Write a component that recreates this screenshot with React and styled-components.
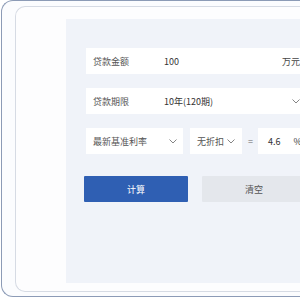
import React from 'react';
import styled, { createGlobalStyle } from 'styled-components';

const Global = createGlobalStyle`
  html, body { margin: 0; padding: 0; background: #ffffff; }
  body { font-family: "Noto Sans CJK SC", "Noto Sans", sans-serif; overflow: hidden; }
`;

const Frame = styled.div`
  margin-left: 1px;
  width: 330px;
  height: 297px;
  box-sizing: border-box;
  border: 1.5px solid #8c9bb6;
  border-right: none;
  border-radius: 12px;
  padding: 5px 0 4px 13px;
  background: #fbfcfe;
  overflow: hidden;
`;

const Card = styled.div`
  height: 100%;
  box-sizing: border-box;
  border: 1px solid #d6dbe4;
  border-right: none;
  border-radius: 10px;
  background: #fdfdfe;
  padding: 12px 0 8px 50px;
`;

const Panel = styled.div`
  height: 100%;
  width: 300px;
  box-sizing: border-box;
  background: #f0f3f9;
  padding: 29px 0 0 20px;
  display: flex;
  flex-direction: column;
  gap: 14px;
`;

const Row = styled.div`
  height: 26px;
  width: 222px;
  background: #ffffff;
  display: flex;
  align-items: center;
  padding: 0 8px 0 7px;
  box-sizing: border-box;
  font-size: 9px;
  color: #444;
`;

const Label = styled.span`
  width: 71px;
  color: #555;
`;

const Value = styled.span`
  flex: 1;
  color: #333;
`;

const Unit = styled.span`
  color: #444;
`;

const RateRow = styled.div`
  display: flex;
  align-items: center;
  gap: 7px;
  height: 26px;
`;

const Select = styled.div`
  width: ${p => p.$w}px;
  height: 26px;
  background: #ffffff;
  display: flex;
  align-items: center;
  justify-content: space-between;
  box-sizing: border-box;
  padding: 0 ${p => p.$pr}px 0 7px;
  font-size: 9px;
  color: #555;
`;

const Eq = styled.span`
  font-size: 9px;
  color: #666;
  width: 5px;
  margin: 0 -2px 0 -1px;
`;

const RateInput = styled.div`
  width: 50px;
  height: 26px;
  background: #ffffff;
  display: flex;
  align-items: center;
  box-sizing: border-box;
  padding-left: 10px;
  font-size: 9px;
  color: #333;
  gap: 13px;
`;

const Buttons = styled.div`
  display: flex;
  gap: 14px;
  margin-top: 8px;
  margin-left: -2px;
`;

const Button = styled.div`
  width: 104px;
  height: 26px;
  display: flex;
  align-items: center;
  justify-content: center;
  font-size: 9px;
  background: ${p => (p.$primary ? '#2f5fb3' : '#e4e7ec')};
  color: ${p => (p.$primary ? '#ffffff' : '#555')};
  border-radius: 1px;
`;

const Chevron = () => (
  <svg width="8" height="5" viewBox="0 0 8 5">
    <polyline points="0.5,0.5 4,4 7.5,0.5" fill="none" stroke="#777" strokeWidth="0.9" />
  </svg>
);

export default function App() {
  return (
    <>
      <Global />
      <Frame>
        <Card>
          <Panel>
            <Row>
              <Label>贷款金额</Label>
              <Value>100</Value>
              <Unit>万元</Unit>
            </Row>
            <Row>
              <Label>贷款期限</Label>
              <Value>10年(120期)</Value>
              <Chevron />
            </Row>
            <RateRow>
              <Select $w={97} $pr={6}>
                最新基准利率
                <Chevron />
              </Select>
              <Select $w={52} $pr={7}>
                无折扣
                <Chevron />
              </Select>
              <Eq>=</Eq>
              <RateInput>
                <span>4.6</span>
                <span>%</span>
              </RateInput>
            </RateRow>
            <Buttons>
              <Button $primary>计算</Button>
              <Button>清空</Button>
            </Buttons>
          </Panel>
        </Card>
      </Frame>
    </>
  );
}
